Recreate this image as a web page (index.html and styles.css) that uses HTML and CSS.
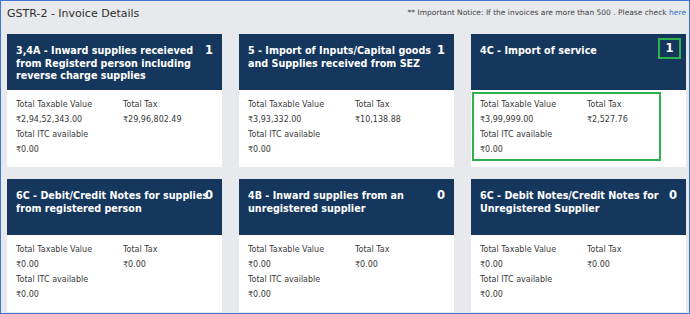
FILE: index.html
```html
<!DOCTYPE html>
<html lang="en">
<head>
    <meta charset="UTF-8">
    <title>GSTR-2 - Invoice Details</title>
    <link rel="stylesheet" href="styles.css">
</head>
<body>
    <div class="frame">
        <div class="top-bar">
            <h1 class="page-title">GSTR-2 - Invoice Details</h1>
            <p class="notice">** Important Notice: If the invoices are more than 500 . Please check <a href="#">here</a></p>
        </div>

        <div class="tiles">
            <div class="tile">
                <div class="tile-head">
                    <span class="tile-name">3,4A - Inward supplies receieved from Registerd person including reverse charge supplies</span>
                    <span class="tile-count">1</span>
                </div>
                <div class="tile-body">
                    <div class="figures">
                        <span>Total Taxable Value</span><span>Total Tax</span>
                        <span>₹2,94,52,343.00</span><span>₹29,96,802.49</span>
                        <span>Total ITC available</span><span></span>
                        <span>₹0.00</span><span></span>
                    </div>
                </div>
            </div>

            <div class="tile">
                <div class="tile-head">
                    <span class="tile-name">5 - Import of Inputs/Capital goods and Supplies received from SEZ</span>
                    <span class="tile-count">1</span>
                </div>
                <div class="tile-body">
                    <div class="figures">
                        <span>Total Taxable Value</span><span>Total Tax</span>
                        <span>₹3,93,332.00</span><span>₹10,138.88</span>
                        <span>Total ITC available</span><span></span>
                        <span>₹0.00</span><span></span>
                    </div>
                </div>
            </div>

            <div class="tile">
                <div class="tile-head">
                    <span class="tile-name">4C - Import of service</span>
                    <span class="tile-count marked">1</span>
                </div>
                <div class="tile-body">
                    <div class="figures marked">
                        <span>Total Taxable Value</span><span>Total Tax</span>
                        <span>₹3,99,999.00</span><span>₹2,527.76</span>
                        <span>Total ITC available</span><span></span>
                        <span>₹0.00</span><span></span>
                    </div>
                </div>
            </div>

            <div class="tile">
                <div class="tile-head">
                    <span class="tile-name">6C - Debit/Credit Notes for supplies from registered person</span>
                    <span class="tile-count">0</span>
                </div>
                <div class="tile-body">
                    <div class="figures">
                        <span>Total Taxable Value</span><span>Total Tax</span>
                        <span>₹0.00</span><span>₹0.00</span>
                        <span>Total ITC available</span><span></span>
                        <span>₹0.00</span><span></span>
                    </div>
                </div>
            </div>

            <div class="tile">
                <div class="tile-head">
                    <span class="tile-name">4B - Inward supplies from an unregistered supplier</span>
                    <span class="tile-count">0</span>
                </div>
                <div class="tile-body">
                    <div class="figures">
                        <span>Total Taxable Value</span><span>Total Tax</span>
                        <span>₹0.00</span><span>₹0.00</span>
                        <span>Total ITC available</span><span></span>
                        <span>₹0.00</span><span></span>
                    </div>
                </div>
            </div>

            <div class="tile">
                <div class="tile-head">
                    <span class="tile-name">6C - Debit Notes/Credit Notes for Unregistered Supplier</span>
                    <span class="tile-count">0</span>
                </div>
                <div class="tile-body">
                    <div class="figures">
                        <span>Total Taxable Value</span><span>Total Tax</span>
                        <span>₹0.00</span><span>₹0.00</span>
                        <span>Total ITC available</span><span></span>
                        <span>₹0.00</span><span></span>
                    </div>
                </div>
            </div>
        </div>
    </div>
</body>
</html>
```

FILE: styles.css
```css
/* GSTR-2 invoice summary tiles */
body {
    margin: 0;
    font-family: 'DejaVu Sans', Verdana, sans-serif;
    color: #333;
}
.frame {
    width: 690px;
    height: 314px;
    box-sizing: border-box;
    border: 1px solid #3f78d4;
    background-color: #e7e9ec;
    padding: 0 3px 0 6px;
    overflow: hidden;
}
.top-bar {
    display: flex;
    justify-content: space-between;
    align-items: flex-start;
    height: 33px;
}
.page-title {
    margin: 5px 0 0;
    font-size: 11px;
    font-weight: normal;
    line-height: 15px;
    color: #2e2e2e;
}
.notice {
    margin: 6px 0 0;
    font-size: 7.5px;
    line-height: 12px;
    color: #444;
}
.notice a {
    color: #2a72c9;
    text-decoration: none;
}
.tiles {
    display: grid;
    grid-template-columns: repeat(3, 215px);
    column-gap: 17px;
    row-gap: 12px;
}
.tile {
    background-color: #ffffff;
}
.tile-head {
    position: relative;
    height: 56px;
    box-sizing: border-box;
    padding: 11px 10px 0 9px;
    background-color: #16375d;
    color: #ffffff;
}
.tile-name {
    display: block;
    font-size: 9.6px;
    font-weight: bold;
    line-height: 12.5px;
}
.tile-count {
    position: absolute;
    top: 9px;
    right: 9px;
    font-size: 11.5px;
    font-weight: bold;
    line-height: 14px;
}
.tile-count.marked {
    top: 4px;
    right: 5px;
    width: 19px;
    height: 17px;
    border: 2px solid #2fb24b;
    text-align: center;
    line-height: 17px;
}
.tile-body {
    padding: 2px 25px 6px 1px;
}
.figures {
    display: grid;
    grid-template-columns: 107px auto;
    padding: 3px 6px 2px;
    border: 2px solid transparent;
    font-size: 8px;
    line-height: 15px;
    color: #3a3a3a;
}
.figures.marked {
    border-color: #2fb24b;
}
```
